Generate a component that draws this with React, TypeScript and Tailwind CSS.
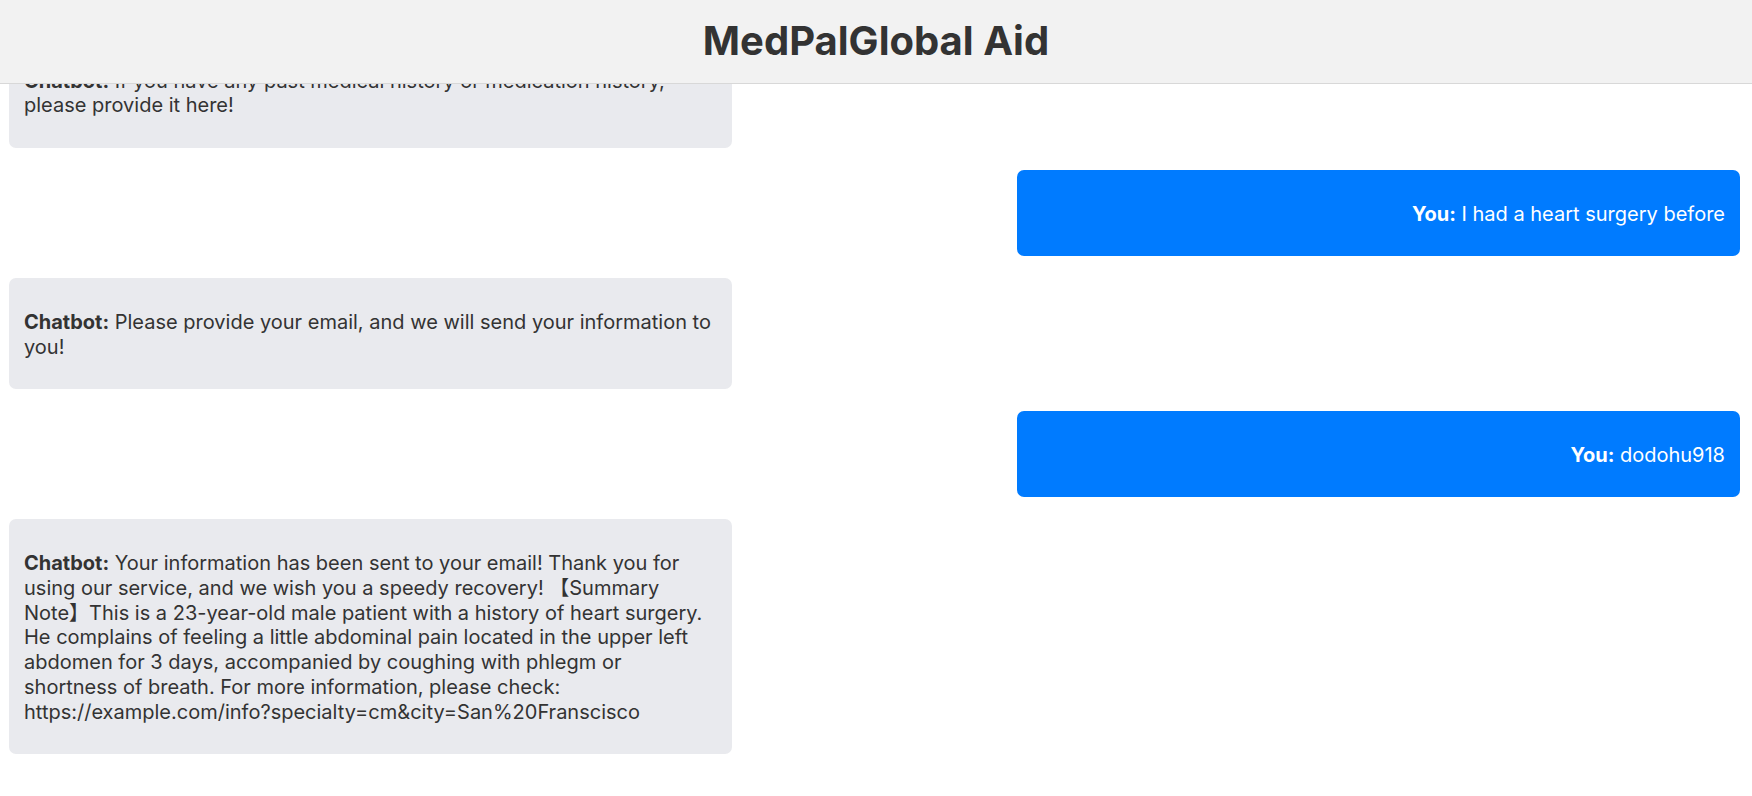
import React from "react";

type Msg = { from: "bot" | "you"; text: string };

const messages: Msg[] = [
  {
    from: "bot",
    text: "If you have any past medical history or medication history, please provide it here!",
  },
  { from: "you", text: "I had a heart surgery before" },
  {
    from: "bot",
    text: "Please provide your email, and we will send your information to you!",
  },
  { from: "you", text: "dodohu918" },
  {
    from: "bot",
    text: "Your information has been sent to your email! Thank you for using our service, and we wish you a speedy recovery! 【Summary Note】This is a 23-year-old male patient with a history of heart surgery. He complains of feeling a little abdominal pain located in the upper left abdomen for 3 days, accompanied by coughing with phlegm or shortness of breath. For more information, please check: https://example.com/info?specialty=cm&city=San%20Franscisco",
  },
];

const Bubble = ({ msg }: { msg: Msg }) => {
  const isYou = msg.from === "you";
  return (
    <div className={`flex ${isYou ? "justify-end" : "justify-start"}`}>
      <div
        className={`w-[723px] rounded-[7px] px-[15px] pt-[32px] pb-[29.5px] text-[20px] leading-[24.75px] break-words ${
          isYou
            ? "bg-[#007bff] text-white text-right"
            : "bg-[#e9eaee] text-[#333333] text-left"
        }`}
      >
        <strong className="font-bold">{isYou ? "You:" : "Chatbot:"}</strong>{" "}
        {msg.text}
      </div>
    </div>
  );
};

export default function App() {
  return (
    <div
      className="h-[796px] w-full overflow-hidden flex flex-col bg-white"
      style={{ fontFamily: "Inter, 'Noto Sans', 'Noto Sans CJK SC', sans-serif" }}
    >
      {/* Header */}
      <header className="h-[84px] shrink-0 bg-[#f2f2f2] border-b border-[#d8d8d8] flex items-center justify-center relative z-10">
        <h1 className="text-[40px] font-bold text-[#333333] leading-none -mt-[2px]">
          MedPalGlobal Aid
        </h1>
      </header>

      {/* Chat list, scrolled a bit so the first message sits under the header */}
      <div className="flex-1 overflow-hidden">
        <div className="-mt-[47.5px] flex flex-col gap-[22px] pl-[9px] pr-[12px]">
          {messages.map((m, i) => (
            <Bubble key={i} msg={m} />
          ))}
        </div>
      </div>
    </div>
  );
}
